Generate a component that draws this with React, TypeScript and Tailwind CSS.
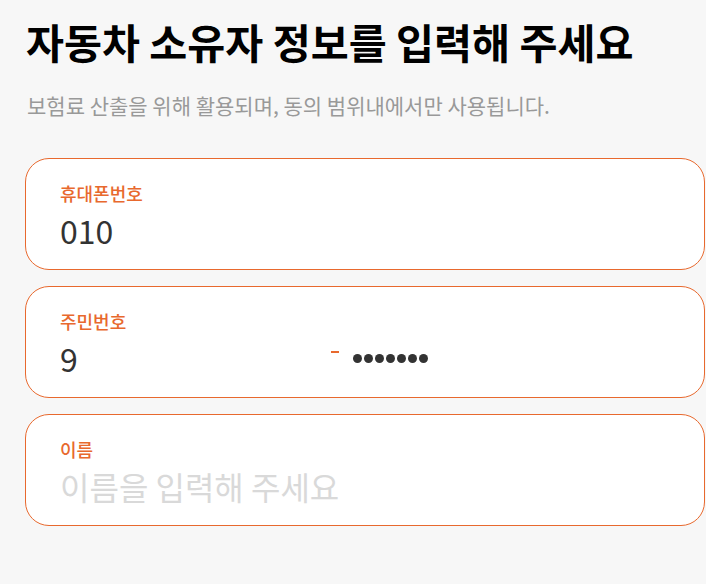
const font = "font-['Noto_Sans_CJK_KR','Noto_Sans',sans-serif]"

function Field({ label, children }: { label: string; children: React.ReactNode }) {
  return (
    <div className="h-[112px] rounded-[24px] border border-[#e8692e] bg-white pl-[34px] pt-[21px]">
      <p className="text-[18px] leading-[26px] font-medium text-[#e8692e]">{label}</p>
      <div className="mt-[3px] h-[42px] flex items-center">{children}</div>
    </div>
  )
}

export default function App() {
  return (
    <div className={`${font} min-h-[584px] bg-[#f7f7f7] pl-[25px] pt-[12px]`}>
      <h1 className="pl-[1px] text-[41.3px] leading-[58px] font-bold text-black">
        자동차 소유자 정보를 입력해 주세요
      </h1>
      <p className="mt-[20px] pl-[2px] text-[21px] leading-[30px] text-[#999999]">
        보험료 산출을 위해 활용되며, 동의 범위내에서만 사용됩니다.
      </p>

      <div className="mt-[38px] w-[680px] flex flex-col gap-[16px]">
        <Field label="휴대폰번호">
          <span className="text-[32px] text-[#333333]">010</span>
        </Field>
        <Field label="주민번호">
          <span className="w-[271px] text-[32px] text-[#333333]">9</span>
          <span className="w-[8px] h-[2px] bg-[#e8692e] -mt-[12px]" />
          <div className="ml-[14px] flex gap-[2px]">
            {Array.from({ length: 7 }).map((_, i) => (
              <span key={i} className="w-[9px] h-[9px] rounded-full bg-[#333333]" />
            ))}
          </div>
        </Field>
        <Field label="이름">
          <span className="text-[32px] text-[#d9d9d9]">이름을 입력해 주세요</span>
        </Field>
      </div>
    </div>
  )
}
